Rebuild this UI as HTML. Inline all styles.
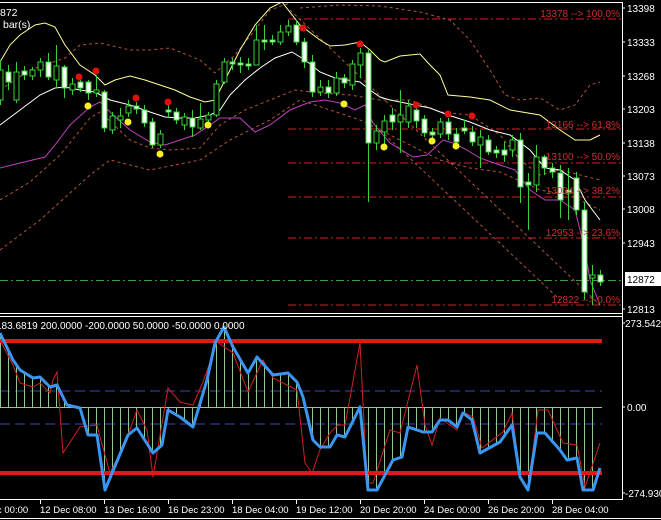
<!DOCTYPE html>
<html><head><meta charset="utf-8"><style>
html,body{margin:0;padding:0;background:#000;}
svg{display:block}
text{font-family:"Liberation Sans",sans-serif;}
</style></head><body>
<svg width="661" height="520" viewBox="0 0 661 520" xmlns="http://www.w3.org/2000/svg">
<rect width="661" height="520" fill="#000"/>
<defs>
<clipPath id="mc"><rect x="0" y="3" width="621" height="309"/></clipPath>
<clipPath id="hc"><polygon points="0,407 0,333 13,360 20,370 33,378 40,377 50,387 57,385 67,405 80,408 88,435 97,435 105,490 110,478 128,435 137,428 153,453 162,445 168,410 180,417 193,427 207,380 215,343 224,327 233,347 248,373 257,357 273,375 288,373 297,382 303,397 313,440 320,447 330,447 337,435 345,437 360,407 368,490 377,490 393,460 402,457 408,427 423,432 432,432 440,420 448,420 457,427 463,413 472,420 480,453 500,442 512,425 520,477 528,490 537,433 545,433 560,450 567,460 577,458 583,490 593,490 600,468 600,407"/></clipPath>
</defs>
<line x1="0" y1="2.5" x2="623" y2="2.5" stroke="#fff"/>
<line x1="622.5" y1="2" x2="622.5" y2="499" stroke="#fff"/>
<line x1="0" y1="313.5" x2="623" y2="313.5" stroke="#fff"/>
<line x1="0" y1="316.5" x2="623" y2="316.5" stroke="#fff"/>
<line x1="0" y1="499.5" x2="623" y2="499.5" stroke="#fff"/>
<line x1="0" y1="518.5" x2="661" y2="518.5" stroke="#fff"/>
<g clip-path="url(#mc)">
<g stroke="#b01818" stroke-width="1.3" stroke-dasharray="8,3,2,3">
<line x1="288" y1="19" x2="621" y2="19"/>
<line x1="288" y1="129" x2="621" y2="129"/>
<line x1="288" y1="163" x2="621" y2="163"/>
<line x1="288" y1="197" x2="621" y2="197"/>
<line x1="288" y1="238" x2="621" y2="238"/>
<line x1="288" y1="305" x2="621" y2="305"/>
</g>
<line x1="0" y1="280.5" x2="621" y2="280.5" stroke="#3a9a3a" stroke-dasharray="8,3,2,3"/>
<g fill="none" stroke="#b0553a" stroke-width="1" stroke-dasharray="3,3">
<polyline points="0,90 30,70 65,58 80,45 100,43 130,50 150,50 170,48 200,60 215,73 235,55 255,30 270,10 290,3"/>
<polyline points="0,200 30,182 60,155 90,118 100,112 130,140 150,148 170,150 200,148 220,125 245,110 270,100 295,90 320,93 350,95 380,100 410,100 440,112 470,115 500,135 520,160 540,175 560,170 600,180"/>
<polyline points="300,8 340,5 380,6 420,12 450,20 470,40 490,70 505,95 520,100 540,98 560,110 575,105 590,85 600,82"/>
<polyline points="0,250 40,220 90,175 110,160 150,170 200,160 230,140 270,120 300,100 330,110 360,120 400,140 440,160 470,168 500,172 540,190 570,195 600,210"/>
<line x1="290" y1="10" x2="600" y2="305"/>
<line x1="380" y1="130" x2="560" y2="300"/>
</g>
<polyline fill="none" stroke="#ffff99" stroke-width="1" points="0,62 10,45 20,35 35,25 45,23 55,27 65,45 80,65 95,75 105,85 115,80 130,76 145,80 160,85 175,90 190,97 205,102 215,100 225,80 240,50 255,25 270,8 282,2 300,25 320,40 330,46 345,45 360,42 370,50 380,60 385,62 400,56 420,54 430,65 440,75 448,95 470,97 490,100 510,110 540,115 560,130 575,140 590,140 600,135"/>
<polyline fill="none" stroke="#ffffff" stroke-width="1" points="0,125 20,110 40,95 55,88 65,87 80,90 95,92 110,100 130,105 150,112 165,117 180,118 195,118 210,115 220,110 230,95 245,80 260,68 275,58 292,52 305,60 320,72 335,78 360,82 370,90 380,97 390,100 410,104 430,108 448,115 470,122 490,130 510,135 530,150 545,168 560,170 575,180 585,200 600,220"/>
<polyline fill="none" stroke="#c040c0" stroke-width="1" points="0,168 20,163 45,157 55,145 70,125 90,107 100,102 110,112 130,130 150,142 165,145 180,140 195,135 210,125 220,118 240,118 255,132 270,125 290,110 310,102 325,100 340,103 355,110 365,105 373,123 390,143 413,157 427,155 443,140 453,143 467,150 480,158 500,165 515,170 530,190 545,200 560,200 575,210 585,250 590,280 600,305"/>
<g stroke="#3cd03c" stroke-width="1">
<path d="M0.5,60V105M8.5,65V90M16.5,62V103M24.5,66V80M32.5,67V80M40.5,58V77M48.5,53V80M56.5,45V88M64.5,65V98M72.5,78V95M80.5,80V92M88.5,80V100M96.5,75V97M104.5,90V132M112.5,112V134M120.5,108V128M128.5,100V117M136.5,102V114M144.5,105V127M152.5,118V148M160.5,130V148M168.5,105V118M176.5,108V124M184.5,113V130M192.5,110V137M200.5,103V130M208.5,112V124M216.5,80V117M224.5,58V84M232.5,58V70M240.5,57V73M248.5,58V70M256.5,25V65M264.5,25V50M272.5,35V45M280.5,25V45M288.5,20V36M296.5,20V45M304.5,38V68M312.5,55V97M320.5,80V96M328.5,80V98M336.5,72V96M344.5,74V88M352.5,60V90M360.5,48V78M368.5,50V202M376.5,125V150M384.5,115V150M392.5,108V130M400.5,90V153M408.5,100V128M416.5,104V128M424.5,115V137M432.5,128V138M440.5,118V138M448.5,118V140M456.5,128V146M464.5,120V134M472.5,126V146M480.5,130V168M488.5,135V155M496.5,146V158M504.5,142V162M512.5,135V157M520.5,133V203M528.5,173V230M536.5,145V192M544.5,155V175M552.5,163V178M560.5,165V218M568.5,168V220M576.5,172V215M584.5,202V300M592.5,265V305M600.5,270V286"/>
<g fill="#000">
<rect x="-2" y="70" width="5" height="30"/><rect x="14" y="72" width="5" height="28"/><rect x="30" y="70" width="5" height="6"/><rect x="38" y="62" width="5" height="8"/><rect x="54" y="66" width="5" height="14"/><rect x="70" y="84" width="5" height="6"/><rect x="94" y="90" width="5" height="3"/><rect x="110" y="116" width="5" height="14"/><rect x="118" y="116" width="5" height="4"/><rect x="126" y="106" width="5" height="7"/><rect x="158" y="134" width="5" height="11"/><rect x="182" y="117" width="5" height="8"/><rect x="198" y="119" width="5" height="9"/><rect x="206" y="115" width="5" height="5"/><rect x="214" y="84" width="5" height="31"/><rect x="222" y="62" width="5" height="20"/><rect x="254" y="40" width="5" height="25"/><rect x="278" y="32" width="5" height="10"/><rect x="286" y="26" width="5" height="6"/><rect x="318" y="87" width="5" height="5"/><rect x="334" y="78" width="5" height="15"/><rect x="350" y="64" width="5" height="21"/><rect x="358" y="53" width="5" height="12"/><rect x="374" y="131" width="5" height="12"/><rect x="382" y="121" width="5" height="11"/><rect x="398" y="115" width="5" height="7"/><rect x="406" y="106" width="5" height="16"/><rect x="438" y="122" width="5" height="12"/><rect x="478" y="137" width="5" height="8"/><rect x="510" y="140" width="5" height="10"/><rect x="534" y="157" width="5" height="28"/><rect x="590" y="275" width="5" height="3"/>
</g>
<g fill="#fff">
<rect x="6" y="72" width="5" height="10"/><rect x="22" y="71" width="5" height="4"/><rect x="46" y="62" width="5" height="15"/><rect x="62" y="67" width="5" height="21"/><rect x="78" y="82" width="5" height="6"/><rect x="86" y="82" width="5" height="11"/><rect x="102" y="92" width="5" height="36"/><rect x="134" y="106" width="5" height="3"/><rect x="142" y="110" width="5" height="13"/><rect x="150" y="122" width="5" height="23"/><rect x="166" y="110" width="5" height="2"/><rect x="174" y="112" width="5" height="8"/><rect x="190" y="118" width="5" height="9"/><rect x="230" y="62" width="5" height="2"/><rect x="238" y="63" width="5" height="2"/><rect x="246" y="64" width="5" height="2"/><rect x="262" y="40" width="5" height="2"/><rect x="270" y="40" width="5" height="2"/><rect x="294" y="25" width="5" height="17"/><rect x="302" y="42" width="5" height="20"/><rect x="310" y="62" width="5" height="30"/><rect x="326" y="87" width="5" height="6"/><rect x="342" y="78" width="5" height="5"/><rect x="366" y="53" width="5" height="90"/><rect x="390" y="115" width="5" height="7"/><rect x="414" y="110" width="5" height="11"/><rect x="422" y="119" width="5" height="14"/><rect x="430" y="132" width="5" height="3"/><rect x="446" y="122" width="5" height="12"/><rect x="454" y="134" width="5" height="8"/><rect x="462" y="128" width="5" height="3"/><rect x="470" y="132" width="5" height="10"/><rect x="486" y="140" width="5" height="12"/><rect x="494" y="150" width="5" height="3"/><rect x="502" y="150" width="5" height="5"/><rect x="518" y="140" width="5" height="47"/><rect x="526" y="182" width="5" height="3"/><rect x="542" y="157" width="5" height="11"/><rect x="550" y="168" width="5" height="4"/><rect x="558" y="173" width="5" height="27"/><rect x="566" y="190" width="5" height="3"/><rect x="574" y="178" width="5" height="32"/><rect x="582" y="210" width="5" height="82"/><rect x="598" y="275" width="5" height="7"/>
</g>
</g>
<g fill="#e01010">
<circle cx="79" cy="77" r="3.5"/><circle cx="96" cy="71" r="3.5"/><circle cx="136" cy="98" r="3.5"/><circle cx="168" cy="102" r="3.5"/><circle cx="303" cy="28" r="3.5"/><circle cx="360" cy="44" r="3.5"/><circle cx="416" cy="105" r="3.5"/><circle cx="448" cy="114" r="3.5"/><circle cx="472" cy="116" r="3.5"/>
</g>
<g fill="#f8f020">
<circle cx="88" cy="106" r="3.5"/><circle cx="128" cy="122" r="3.5"/><circle cx="160" cy="154" r="3.5"/><circle cx="208" cy="125" r="3.5"/><circle cx="344" cy="104" r="3.5"/><circle cx="384" cy="147" r="3.5"/><circle cx="432" cy="141" r="3.5"/><circle cx="456" cy="146" r="3.5"/>
</g>
<g fill="#c83030" font-size="10" text-anchor="end">
<text x="620" y="17">13378 --&gt; 100.0%</text>
<text x="620" y="128">13166 --&gt; 61.8%</text>
<text x="620" y="160">13100 --&gt; 50.0%</text>
<text x="620" y="194">13034 --&gt; 38.2%</text>
<text x="620" y="236">12953 --&gt; 23.6%</text>
<text x="620" y="303">12822 --&gt; 0.0%</text>
</g>
<text x="0" y="16" fill="#fff" font-size="10.5">872</text>
<text x="3" y="28" fill="#fff" font-size="10.5">bar(s)</text>
</g>
<g stroke="#fff"><path d="M622,8h3M622,42h3M622,76h3M622,109h3M622,143h3M622,176h3M622,209h3M622,243h3M622,309h3M622,323h3M622,407h3M622,493h3"/></g>
<g fill="#fff" font-size="10">
<text x="627" y="12">13398</text><text x="627" y="46">13333</text><text x="627" y="80">13268</text><text x="627" y="113">13203</text><text x="627" y="147">13138</text><text x="627" y="180">13073</text><text x="627" y="213">13008</text><text x="627" y="247">12943</text><text x="627" y="313">12813</text>
<text x="625" y="327">273.5427</text><text x="627" y="411">0.00</text><text x="625" y="497">-274.930</text>
</g>
<rect x="625" y="272" width="36" height="14" fill="#fff"/>
<text x="627" y="283" fill="#000" font-size="10">12872</text>
<g>
<line x1="0" y1="391" x2="602" y2="391" stroke="#3a48b8" stroke-dasharray="10,5"/>
<line x1="0" y1="424" x2="602" y2="424" stroke="#3a48b8" stroke-dasharray="10,5"/>
<line x1="0" y1="407.5" x2="602" y2="407.5" stroke="#90c890"/>
<g clip-path="url(#hc)" stroke="#90c890" stroke-width="1">
<path d="M0.5,330V495M8.5,330V495M16.5,330V495M24.5,330V495M32.5,330V495M40.5,330V495M48.5,330V495M56.5,330V495M64.5,330V495M72.5,330V495M80.5,330V495M88.5,330V495M96.5,330V495M104.5,330V495M112.5,330V495M120.5,330V495M128.5,330V495M136.5,330V495M144.5,330V495M152.5,330V495M160.5,330V495M168.5,330V495M176.5,330V495M184.5,330V495M192.5,330V495M200.5,330V495M208.5,330V495M216.5,330V495M224.5,330V495M232.5,330V495M240.5,330V495M248.5,330V495M256.5,330V495M264.5,330V495M272.5,330V495M280.5,330V495M288.5,330V495M296.5,330V495M304.5,330V495M312.5,330V495M320.5,330V495M328.5,330V495M336.5,330V495M344.5,330V495M352.5,330V495M360.5,330V495M368.5,330V495M376.5,330V495M384.5,330V495M392.5,330V495M400.5,330V495M408.5,330V495M416.5,330V495M424.5,330V495M432.5,330V495M440.5,330V495M448.5,330V495M456.5,330V495M464.5,330V495M472.5,330V495M480.5,330V495M488.5,330V495M496.5,330V495M504.5,330V495M512.5,330V495M520.5,330V495M528.5,330V495M536.5,330V495M544.5,330V495M552.5,330V495M560.5,330V495M568.5,330V495M576.5,330V495M584.5,330V495M592.5,330V495M600.5,330V495"/>
</g>
<rect x="0" y="339" width="602" height="4" fill="#e01818"/>
<rect x="0" y="471" width="602" height="4" fill="#e01818"/>
<polyline fill="none" stroke="#d02020" stroke-width="1" points="0,340 13,365 20,383 33,387 40,383 50,393 53,380 57,372 63,453 80,427 97,425 100,437 110,473 125,443 137,410 147,430 153,477 168,388 180,402 193,405 203,382 217,342 233,353 248,392 263,360 273,378 297,390 305,463 312,473 320,450 330,433 338,425 345,425 360,343 367,483 373,483 390,430 400,433 417,365 425,425 432,445 440,418 457,430 463,412 473,417 482,448 503,432 512,413 520,473 530,473 538,410 548,410 563,443 577,445 585,487 600,443"/>
<polyline fill="none" stroke="#3a96f0" stroke-width="3" stroke-linejoin="round" points="0,333 13,360 20,370 33,378 40,377 50,387 57,385 67,405 80,408 88,435 97,435 105,490 110,478 128,435 137,428 153,453 162,445 168,410 180,417 193,427 207,380 215,343 224,327 233,347 248,373 257,357 273,375 288,373 297,382 303,397 313,440 320,447 330,447 337,435 345,437 360,407 368,490 377,490 393,460 402,457 408,427 423,432 432,432 440,420 448,420 457,427 463,413 472,420 480,453 500,442 512,425 520,477 528,490 537,433 545,433 560,450 567,460 577,458 583,490 593,490 600,468"/>
<text x="-4" y="329" fill="#fff" font-size="10">183.6819 200.0000 -200.0000 50.0000 -50.0000 0.0000</text>
</g>
<g stroke="#fff"><path d="M40.5,499v5M104.5,499v5M168.5,499v5M232.5,499v5M296.5,499v5M360.5,499v5M424.5,499v5M488.5,499v5M552.5,499v5"/></g>
<g fill="#fff" font-size="9.5">
<text x="-3" y="513">c 00:00</text>
<text x="40" y="513">12 Dec 08:00</text>
<text x="104" y="513">13 Dec 16:00</text>
<text x="168" y="513">16 Dec 23:00</text>
<text x="232" y="513">18 Dec 04:00</text>
<text x="296" y="513">19 Dec 12:00</text>
<text x="360" y="513">20 Dec 20:00</text>
<text x="424" y="513">24 Dec 00:00</text>
<text x="488" y="513">26 Dec 20:00</text>
<text x="552" y="513">28 Dec 04:00</text>
</g>
</svg>
</body></html>
